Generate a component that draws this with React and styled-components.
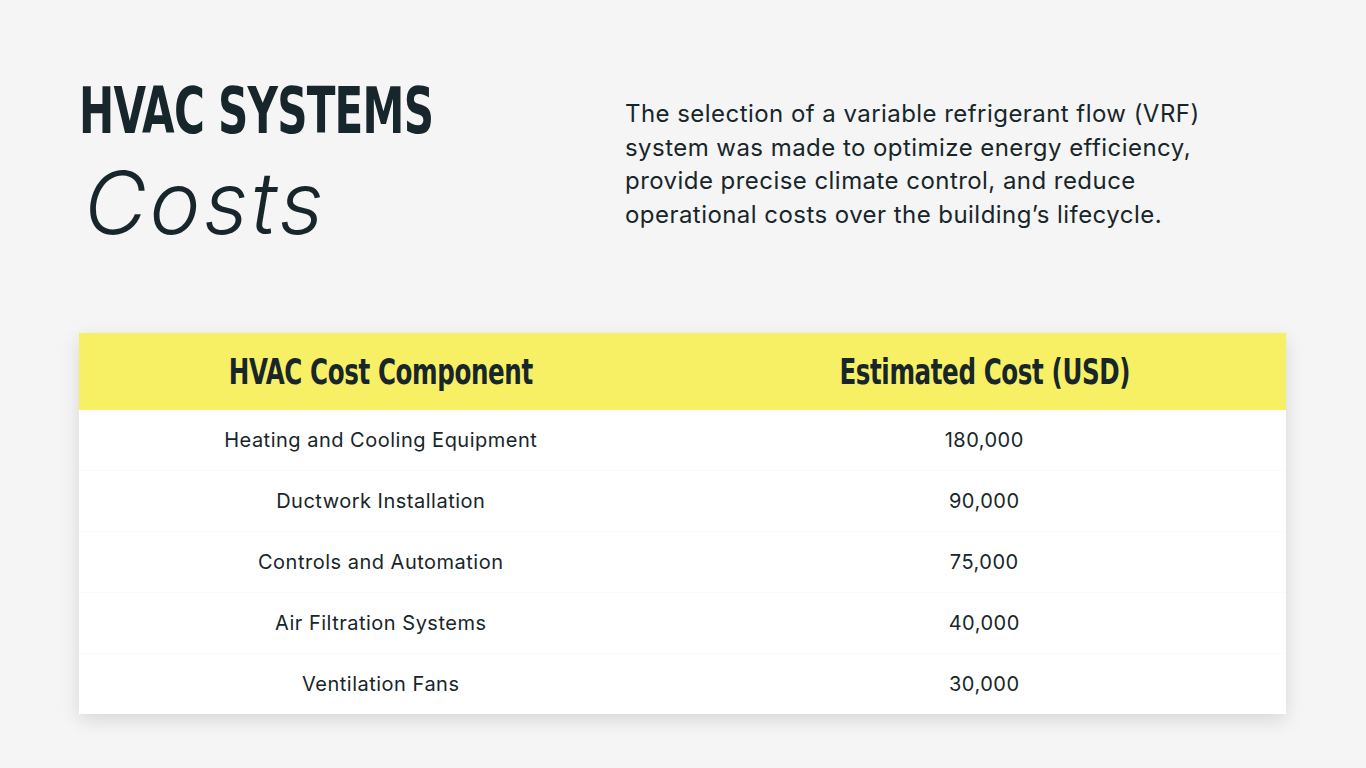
import styled, { createGlobalStyle } from "styled-components";

const GlobalStyle = createGlobalStyle`
    html, body {
        margin: 0;
        padding: 0;
        background: #f5f5f5;
    }
    body {
        font-family: "Inter", "Noto Sans", sans-serif;
        color: #17262a;
    }
`;

const rows = [
    { name: "Heating and Cooling Equipment", cost: "180,000" },
    { name: "Ductwork Installation", cost: "90,000" },
    { name: "Controls and Automation", cost: "75,000" },
    { name: "Air Filtration Systems", cost: "40,000" },
    { name: "Ventilation Fans", cost: "30,000" },
];

const Slide = styled.div`
    width: 1366px;
    height: 768px;
    box-sizing: border-box;
    padding: 78px 80px 0 79px;
    display: flex;
    flex-direction: column;
`;

const Top = styled.div`
    display: flex;
    height: 255px;
`;

const TitleBlock = styled.div`
    width: 546px;
    display: flex;
    flex-direction: column;
`;

const Title = styled.h1`
    margin: 0;
    font-family: "Liberation Sans Narrow", "DejaVu Sans Condensed", sans-serif;
    font-weight: 700;
    font-size: 64px;
    line-height: 66px;
    letter-spacing: -1px;
    color: #17262a;
    transform: scaleX(0.73);
    transform-origin: left center;
    white-space: nowrap;
`;

const Subtitle = styled.h2`
    margin: 14px 0 0 5px;
    font-family: "Inter", "Noto Sans", sans-serif;
    font-style: italic;
    font-weight: 300;
    font-size: 86px;
    line-height: 90px;
    letter-spacing: 3px;
    color: #17262a;
`;

const Intro = styled.p`
    margin: 19px 0 0 0;
    width: 595px;
    font-size: 24px;
    line-height: 33.5px;
    letter-spacing: 0.45px;
    color: #17262a;
`;

const Table = styled.div`
    background: #ffffff;
    box-shadow: 0 6px 18px rgba(0, 0, 0, 0.12);
`;

const HeadRow = styled.div`
    display: grid;
    grid-template-columns: 1fr 1fr;
    height: 77px;
    align-items: center;
    background: #f8f064;
`;

const HeadCell = styled.div`
    text-align: center;
    font-family: "Liberation Sans Narrow", "DejaVu Sans Condensed", sans-serif;
    font-weight: 700;
    font-size: 35px;
    letter-spacing: -0.5px;
    color: #17262a;
    transform: scaleX(0.78);
`;

const Row = styled.div`
    display: grid;
    grid-template-columns: 1fr 1fr;
    height: 60px;
    align-items: center;
    border-top: ${(p) => (p.first ? "none" : "1px solid #fbfbfb")};
`;

const Cell = styled.div`
    text-align: center;
    font-size: 20px;
    letter-spacing: 0.5px;
    color: #17262a;
`;

const App = () => {
    return (
        <>
            <GlobalStyle />
            <Slide>
                <Top>
                    <TitleBlock>
                        <Title>HVAC SYSTEMS</Title>
                        <Subtitle>Costs</Subtitle>
                    </TitleBlock>
                    <Intro>
                        The selection of a variable refrigerant flow (VRF)
                        system was made to optimize energy efficiency,
                        provide precise climate control, and reduce
                        operational costs over the building’s lifecycle.
                    </Intro>
                </Top>
                <Table>
                    <HeadRow>
                        <HeadCell>HVAC Cost Component</HeadCell>
                        <HeadCell>Estimated Cost (USD)</HeadCell>
                    </HeadRow>
                    {rows.map((r, i) => (
                        <Row key={r.name} first={i === 0}>
                            <Cell>{r.name}</Cell>
                            <Cell>{r.cost}</Cell>
                        </Row>
                    ))}
                </Table>
            </Slide>
        </>
    );
};

export default App;
